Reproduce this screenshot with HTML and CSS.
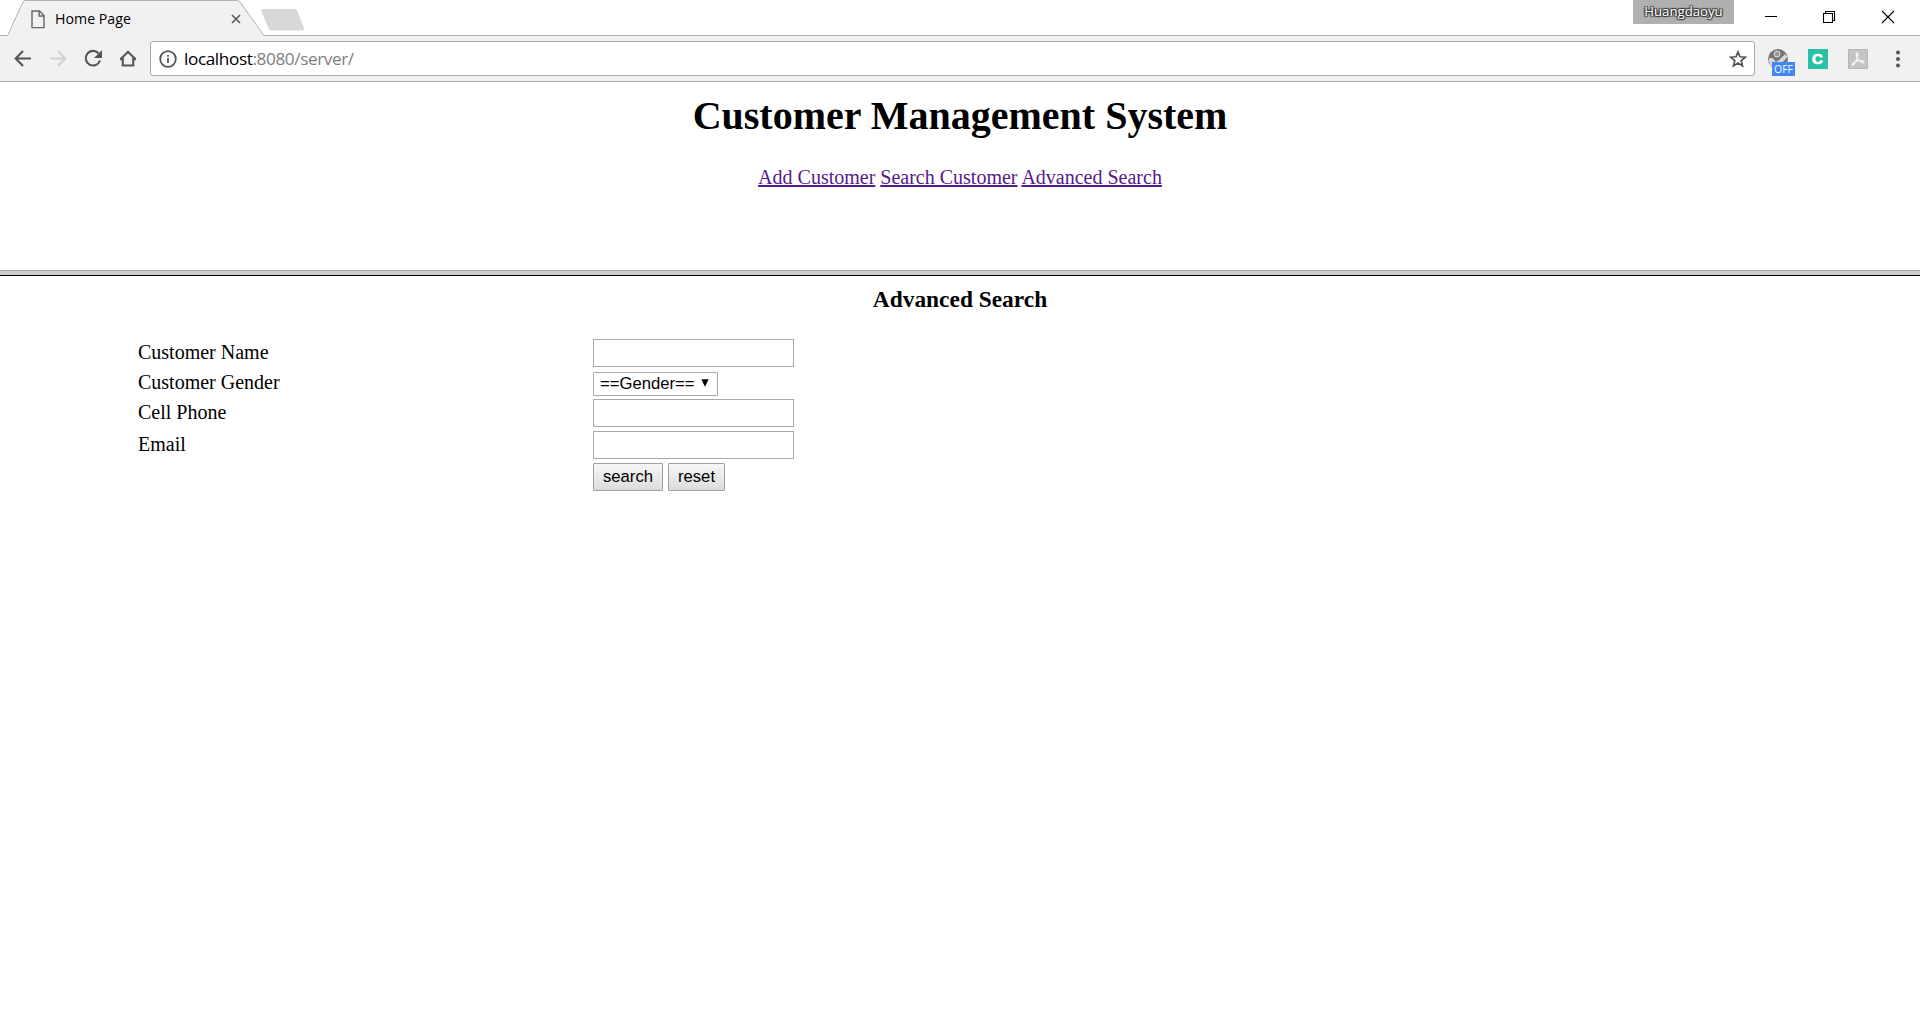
FILE: index.html
```html
<!DOCTYPE html>
<html lang="en">
<head>
<meta charset="utf-8">
<title>Home Page</title>
<link rel="stylesheet" href="styles.css">
</head>
<body>
<header class="tabstrip">
  <div class="tab">
    <svg class="tab-shape" width="258" height="36" viewBox="0 0 258 36"><path d="M0 36 L1 35.5 L16 2 Q17 .5 19 .5 H230 Q232 .5 233 2 L257 35.5 V36 Z" fill="#f1f1f1"/><path d="M0 35.5 L1 34.5 L16 2 Q17 .5 19 .5 H230 Q232 .5 233 2 L257 35.5" fill="none" stroke="#b0b0b0"/></svg>
    <svg class="doc" width="14" height="19" viewBox="0 0 14 19" fill="none" stroke="#666" stroke-width="1.4"><path d="M1 1H8.5L13 5.5V17.6H1Z"/><path d="M8.2 1V6H13"/></svg>
    <span class="tab-title">Home Page</span>
    <svg class="tab-close" width="10" height="10" viewBox="0 0 10 10" stroke="#5a5a5a" stroke-width="1.7"><path d="M1 1L9 9M9 1L1 9"/></svg>
  </div>
  <svg class="new-tab" width="44" height="22" viewBox="0 0 44 22"><path d="M2 .5H33Q35 .5 36 2L42.500 19Q43 21 41 21H11Q9 21 8 19.500L.8 2Q.5 .5 2 .5Z" fill="#d8d8d8" stroke="#d0d0d0" stroke-width=".7"/></svg>
  <span class="profile">Huangdaoyu</span>
  <div class="controls">
    <svg width="58" height="34" viewBox="0 0 58 34" fill="none" stroke="#000"><path d="M23 16.500H35"/></svg>
    <svg width="58" height="34" viewBox="0 0 58 34" fill="none" stroke="#000" stroke-width="1.100"><path d="M23.500 13.500H32.500V22.500H23.500Z"/><path d="M25.500 13V11.500H34.500V20.500H33"/></svg>
    <svg width="58" height="34" viewBox="0 0 58 34" fill="none" stroke="#000" stroke-width="1.100"><path d="M24 11L36 23M36 11L24 23"/></svg>
  </div>
</header>
<nav class="toolbar">
  <svg class="tool" width="35" height="35" viewBox="0 0 35 35" fill="none" stroke="#555" stroke-width="2.100"><path d="M26 17.500H11M18 10L10.700 17.500L18 25"/></svg>
  <svg class="tool" width="35" height="35" viewBox="0 0 35 35" fill="none" stroke="#d0d0d0" stroke-width="2.100"><path d="M10 17.500H25M18 10L25.300 17.500L18 25"/></svg>
  <svg class="tool" width="35" height="35" viewBox="0 0 35 35"><path d="M23.500 12.300A7.300 7.300 0 1 0 25 19.500" fill="none" stroke="#555" stroke-width="2.100"/><path d="M27 9V17H19Z" fill="#555"/></svg>
  <svg class="tool" width="35" height="35" viewBox="0 0 35 35" fill="none" stroke="#555" stroke-width="2.100"><path d="M10.500 18.200L18 10.800L25.500 18.200M12.800 17V24.500H23.200V17M10 18.200H13.500M22.500 18.200H26"/></svg>
  <div class="omnibox">
    <svg width="18" height="18" viewBox="0 0 18 18"><circle cx="9" cy="9" r="7.800" fill="none" stroke="#555" stroke-width="1.800"/><path d="M9 8V13M9 5V6.800" stroke="#555" stroke-width="1.800"/></svg>
    <span class="url"><b>localhost</b>:8080/server/</span>
    <svg class="star" width="18" height="18" viewBox="0 0 18 18"><path d="M9 1.900L11 6.800L16.300 7.200L12.200 10.600L13.500 15.900L9 13L4.500 15.900L5.800 10.600L1.700 7.200L7 6.800Z" fill="none" stroke="#555" stroke-width="1.700"/></svg>
  </div>
  <div class="ext">
    <svg width="22" height="22" viewBox="0 0 22 22"><circle cx="11" cy="11" r="10" fill="#757575"/><path d="M1.500 12C3 8.500 5.500 9 9 14L18 6L20.500 9L10 20Q3 20 1.500 12Z" fill="#d8d8d8"/><circle cx="10" cy="6" r="3" fill="#999" stroke="#e0e0e0"/><path d="M8 10L11 12L17 6" stroke="#777" fill="none" stroke-width="1.500"/></svg>
    <span class="off">OFF</span>
  </div>
  <div class="ext"><span class="c-logo">C</span></div>
  <div class="ext"><svg class="pdf" width="20" height="20" viewBox="0 0 20 20"><path d="M.5 .5H19.500V19.500H.5Z" fill="#c4c4c4" stroke="#b5b5b5"/><path d="M9 4C7.500 4 8.500 7 10 10C12 13 16 15 16 13C16 11 10 11 6 13.500C3 15.500 4 17 5.500 15.500C8 13 10.500 7 10 4.800Q9.800 4 9 4Z" fill="none" stroke="#f4f4f4" stroke-width="1.300"/></svg></div>
  <div class="ext"><svg width="6" height="18" viewBox="0 0 6 18" fill="#555"><circle cx="3" cy="2.500" r="2"/><circle cx="3" cy="9" r="2"/><circle cx="3" cy="15.500" r="2"/></svg></div>
</nav>
<section class="top-frame">
  <h1>Customer Management System</h1>
  <p class="links"><a href="#">Add Customer</a> <a href="#">Search Customer</a> <a href="#">Advanced Search</a></p>
</section>
<div class="splitter"></div>
<main>
  <h3>Advanced Search</h3>
  <form class="form">
    <label for="name">Customer Name</label><input id="name" type="text">
    <label for="gender">Customer Gender</label>
    <div class="select"><select id="gender"><option>==Gender==</option></select><svg width="8" height="8" viewBox="0 0 8 8"><path d="M.3 .3H7.700L4 7.800Z"/></svg></div>
    <label for="phone">Cell Phone</label><input id="phone" type="text">
    <label for="email">Email</label><input id="email" type="text">
    <div class="buttons"><button class="search" type="button">search</button><button class="reset" type="reset">reset</button></div>
  </form>
</main>
</body>
</html>
```
FILE: styles.css
```css
* { box-sizing: border-box; }
body { margin: 0; background: #fff; color: #000; font: 20px/23px "Liberation Serif", "Times New Roman", serif; overflow: hidden; }
svg { display: block; flex: none; }

.tabstrip { display: flex; align-items: flex-start; height: 36px; border-bottom: 1px solid #b0b0b0; font-family: "Open Sans", sans-serif; }
.tab { position: relative; display: flex; width: 258px; height: 36px; margin-left: 7px; }
.tab-shape { position: absolute; left: 0; top: 0; }
.doc { position: relative; margin: 10px 0 0 24px; }
.tab-title { position: relative; width: 176px; margin: 8px 0 0 10px; font-size: 14.200px; line-height: 22px; white-space: nowrap; }
.tab-close { position: relative; margin-top: 14px; }
.new-tab { margin: 9px 0 0 -4px; }
.profile { width: 101px; height: 24px; margin-left: auto; background: #b0b0b0; color: #fff; font-size: 13.200px; line-height: 23px; text-align: center; text-shadow: 1px 1px 1px #333, -1px -1px 1px #333, 1px -1px 1px #333, -1px 1px 1px #333; }
.controls { display: flex; width: 186px; padding-left: 8px; }

.toolbar { display: flex; align-items: center; height: 46px; padding: 0 2px 0 5px; background: #f1f1f1; border-bottom: 1px solid #b0b0b0; font-family: "Open Sans", sans-serif; }
.omnibox { display: flex; align-items: center; width: 1605px; height: 35px; margin: 0 3px 0 5px; padding: 0 7px 0 8px; background: #fff; border: 1px solid #a8a8a8; border-radius: 3px; }
.url { margin-left: 7px; color: #808080; font-size: 17.200px; line-height: 24px; letter-spacing: -.4px; }
.url b { color: #000; font-weight: 400; }
.star { margin-left: auto; }
.ext { position: relative; display: flex; align-items: center; justify-content: center; width: 40px; height: 35px; }
.off { position: absolute; left: 14px; top: 21px; width: 23px; height: 14px; background: #4285f4; color: #fff; font-size: 10.500px; line-height: 15px; text-align: center; }
.c-logo { width: 20px; height: 20px; margin-right: 1px; background: #2bbfa5; color: #fff; font: bold 15px/20px "Liberation Sans", Arial, sans-serif; text-align: center; -webkit-text-stroke: .7px #fff; }
.pdf { margin-right: 1px; }

.top-frame { height: 188px; padding-top: 11px; text-align: center; }
h1 { margin: 0; font-size: 40px; line-height: 46px; }
.links { margin: 27px 0 0; }
.links a { color: #551a8b; text-decoration: underline; text-decoration-thickness: 2px; }
.splitter { height: 6px; background: #cacdca; border-top: 1px solid #a0a5a0; border-bottom: 1px solid #000; }

h3 { margin: 10px 0 26px; font-size: 23.400px; line-height: 27px; text-align: center; }
.form { display: grid; grid-template-columns: 455px 201px; grid-template-rows: 28px 24px 28px 28px 28px; row-gap: 4px; margin: 0 0 0 138px; align-items: center; }
.form label { padding-bottom: 1px; }
.form input { width: 201px; height: 28px; margin: 0; border: 1px solid #a9a9a9; background: #fff; }
.select { position: relative; width: 125px; height: 24px; }
.select select { appearance: none; width: 125px; height: 24px; margin: 0; padding: 0 0 0 6px; border: 1px solid #a9a9a9; border-radius: 1px; background: #fff; color: #000; font: 16.670px "Liberation Sans", Arial, sans-serif; }
.select svg { position: absolute; right: 9px; top: 8px; }
.buttons { grid-column: 2; display: flex; gap: 5px; }
.buttons button { height: 28px; padding: 0; border: 1px solid #a0a0a0; border-radius: 1px; background: linear-gradient(#f7f7f7, #dcdcdc); color: #000; font: 16.670px "Liberation Sans", Arial, sans-serif; }
.search { width: 70px; }
.reset { width: 57px; }
```
